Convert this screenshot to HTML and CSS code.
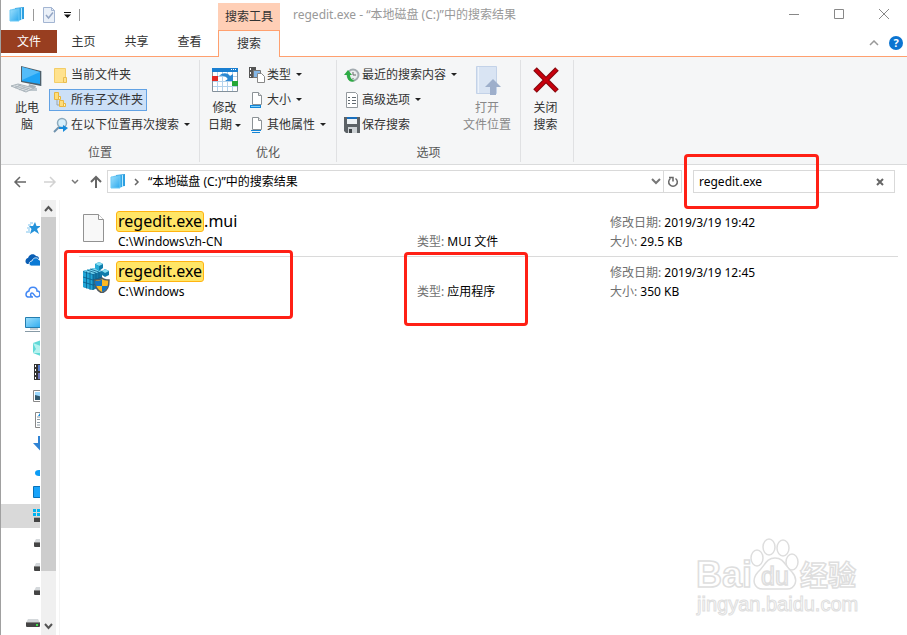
FILE: index.html
```html
<!DOCTYPE html>
<html lang="zh-CN">
<head>
<meta charset="utf-8">
<title>regedit.exe - “本地磁盘 (C:)”中的搜索结果</title>
<link rel="stylesheet" href="styles.css">
</head>
<body>
<svg class="defs" aria-hidden="true">
  <defs>
    <linearGradient id="sky" x1="0" y1="0" x2="1" y2="1"><stop offset="0" stop-color="#9fe0fc"/><stop offset="1" stop-color="#2ba9ee"/></linearGradient>
    <symbol id="library" viewBox="0 0 16 16">
      <path d="M6 1l9-1v12l-9 1z" fill="#2d9fe0"/><path d="M4 2l9-1v12l-9 1z" fill="#b5e9ff"/><path d="M3.500 2l8.500-1v12l-8.500 1z" fill="#35a9e8"/><path d="M1 3l9-1v12l-9 0z" fill="url(#sky)" stroke="#6cc9f5"/>
    </symbol>
    <symbol id="drive" viewBox="0 0 16 16"><path d="M3 5h10l2 4H1z" fill="#d4d8db"/><rect x="1" y="8" width="14" height="5" rx="1" fill="#454545"/><rect x="1" y="8" width="14" height="1" fill="#858585"/><rect x="11" y="10" width="2" height="2" fill="#41e04d"/></symbol>
    <symbol id="paper" viewBox="0 0 12 14"><path d="M1.500.5h6l3 3v9h-9z" fill="#fff" stroke="#8c9296"/><path d="M7.500.5v3h3" fill="#e8e8e8" stroke="#8c9296"/></symbol>
  </defs>
</svg>
<div class="window">
  <header class="top">
    <div class="titlebar">
      <div class="quick">
        <svg width="16" height="16"><use href="#library"/></svg>
        <span class="bar"></span>
        <button class="plain" aria-label="属性"><svg width="14" height="16" viewBox="0 0 14 16"><path d="M1.500.5h8l3 3v12h-11z" fill="#eaf0f8" stroke="#a3b5d2"/><path d="M9.500.5v3h3" fill="none" stroke="#a3b5d2"/><path d="M4 8l2.500 3L11 5.500" fill="none" stroke="#93a5c4" stroke-width="1.500"/></svg></button>
        <button class="plain" aria-label="自定义快速访问工具栏"><svg width="7" height="6" viewBox="0 0 7 6"><path d="M0 0h7v1H0zM0 2.500h7L3.500 6z" fill="#111"/></svg></button>
        <span class="bar"></span>
      </div>
      <div class="context">搜索工具</div>
      <h1>regedit.exe - “本地磁盘 (C:)”中的搜索结果</h1>
      <div class="controls">
        <button class="plain" aria-label="最小化"><svg width="12" height="12"><path d="M1 6.500h10" stroke="#888"/></svg></button>
        <button class="plain" aria-label="最大化"><svg width="12" height="12"><path d="M1.500 1.500h9v9h-9z" fill="none" stroke="#888"/></svg></button>
        <button class="plain" aria-label="关闭"><svg width="12" height="12"><path d="M1 1l10 10M11 1L1 11" stroke="#888"/></svg></button>
      </div>
    </div>
    <nav class="tabs">
      <button class="file">文件</button>
      <button>主页</button>
      <button>共享</button>
      <button>查看</button>
      <button class="active">搜索</button>
      <div class="help">
        <button class="plain" aria-label="最小化功能区"><svg width="10" height="6"><path d="M1 5l4-4 4 4" fill="none" stroke="#999" stroke-width="1.500"/></svg></button>
        <button class="round" aria-label="帮助">?</button>
      </div>
    </nav>
  </header>

  <div class="ribbon">
    <section class="group location">
      <div class="tools">
        <button class="big"><svg width="32" height="32" viewBox="0 0 32 32"><path d="M10 2l20 5v15l-20-4z" fill="#4e5e69"/><path d="M11 3l18 5v12l-18-3z" fill="#1fa4f5"/><path d="M11 3l18 5-18 8z" fill="#54bcf8"/><path d="M30 7l1 0v15l-1 0z" fill="#bbc7ce"/><path d="M18 20l-1 4 7 1 1-3z" fill="#a7b1b8"/><path d="M14 23l12 1v3l-9 0z" fill="#bec7cd"/><path d="M0 22l7-2 16 4-8 4z" fill="#d9dfe3" stroke="#a9b3ba"/><path d="M4 22l13 4M7 21l12 4M4 24l6-3m-2 5l6-3m-2 4l6-3" stroke="#a3adb4" stroke-width=".7"/></svg><span>此电<br>脑</span></button>
        <div class="stack">
          <button><svg width="16" height="16"><path d="M1.500 1.500h11v14h-11z" fill="#ffe28d" stroke="#f3cd67"/><path d="M10.500 10.500h3v5h-3z" fill="#ffe28d" stroke="#e9bd50"/></svg>当前文件夹</button>
          <button class="selected"><svg width="16" height="16"><path d="M4 8v5h3" fill="none" stroke="#9da5a9"/><path d="M1.500.5h4v7h-4zM6.500 8.500h4v6h-4z" fill="#ffdd7a" stroke="#e8b63f"/><path d="M5.500 4.500h2v3h-2zM10.500 11.500h2v3h-2z" fill="#fff0ba" stroke="#e8b63f"/></svg>所有子文件夹</button>
          <button><svg width="16" height="16"><path d="M1 15l5-5" stroke="#6f92ad" stroke-width="2"/><circle cx="9" cy="6" r="4.500" fill="#d6effb" stroke="#8caabd" stroke-width="1.500"/><path d="M6 10h4V8l5 3-5 4v-3H6z" fill="#168bdb"/></svg>在以下位置再次搜索<i class="caret"></i></button>
        </div>
      </div>
      <h2>位置</h2>
    </section>
    <section class="group refine">
      <div class="tools">
        <button class="big"><svg width="28" height="32" viewBox="0 0 28 32"><path d="M1.500 4.500h25v23h-25z" fill="#fff" stroke="#83909a"/><path d="M1 4h26v4H1z" fill="#1a7fd1"/><path d="M20 5h1v1h-1zm2 0h1v1h-1zm2 0h1v1h-1z" fill="#fff"/><path d="M6.500 8v19m5-19v19m5-19v19m5-19v19M2 12.500h24M2 17.500h24M2 22.500h24" stroke="#b3d2ec"/><path d="M8 12c4-4 9-3 11 0l3-2v7h-8l3-2c-2-3-5-4-9-3z" fill="#2c88d2"/><path d="M1 12h6v5H1z" fill="#e22923"/><path d="M21 17h6v5h-6z" fill="#24a637"/></svg><span>修改<br>日期<i class="caret"></i></span></button>
        <div class="stack">
          <button><svg width="16" height="16"><path d="M0 0h7v11H0z" fill="#555"/><path d="M1 1h1v2H1zm0 4h1v2H1zm0 4h1v1H1z" fill="#fff"/><path d="M4.500 3.500h7v7h-7z" fill="#85b8e8" stroke="#777"/><path d="M8.500 6.500h4l3 3v6h-7z" fill="#fff" stroke="#888"/></svg>类型<i class="caret"></i></button>
          <button><svg width="16" height="16"><use href="#paper" x="2" width="12" height="14"/><path d="M1 13h11v3H1z" fill="#1485d6"/><path d="M2 14h9v1H2z" fill="#7bd2ff"/></svg>大小<i class="caret"></i></button>
          <button><svg width="16" height="16"><use href="#paper" x="2" width="12" height="14"/><path d="M2 13h10v1H2zm1 2h8v1H3z" fill="#1485d6"/></svg>其他属性<i class="caret"></i></button>
        </div>
      </div>
      <h2>优化</h2>
    </section>
    <section class="group options">
      <div class="tools">
        <div class="stack">
          <button><svg width="16" height="16"><circle cx="9" cy="8" r="5.500" fill="#e9ecee" stroke="#a3abb0" stroke-width="2"/><path d="M9 5v3h3M9 11v1" fill="none" stroke="#666"/><path d="M0 8l4-5 4 5H6c0 3 2 5 5 6-5 2-8-1-8-6z" fill="#2eab45"/></svg>最近的搜索内容<i class="caret"></i></button>
          <button><svg width="16" height="16"><path d="M2.500.5h9l2 2v13h-11z" fill="#fff" stroke="#93999d"/><path d="M4 5h2v1H4zm0 3h2v1H4zm0 3h2v1H4zm4-6h4v1H8zm0 3h4v1H8zm0 3h4v1H8z" fill="#616a70"/></svg>高级选项<i class="caret"></i></button>
          <button><svg width="16" height="16"><path d="M0 0h16v16H2l-2-2z" fill="#5c6266"/><path d="M3 0h10v7H3z" fill="#eef2f4"/><path d="M3 0h10v2H3z" fill="#1a6fbd"/><path d="M4 10h9v6H4z" fill="#cdd2d5"/><path d="M5 12h3v4H5z" fill="#41464a"/></svg>保存搜索</button>
        </div>
        <button class="big wide" disabled><svg width="28" height="32" viewBox="0 0 28 32"><path d="M3.500 2.500h20v27h-20z" fill="#d9e4f3" stroke="#c3d2e8"/><path d="M5.500 3v26" stroke="#edf3fb"/><path d="M20 15l8 8h-5v8h-6v-8h-5z" fill="#9eafcb"/></svg><span>打开<br>文件位置</span></button>
      </div>
      <h2>选项</h2>
    </section>
    <section class="group closing">
      <div class="tools">
        <button class="big"><svg width="28" height="32" viewBox="0 0 28 32"><path d="M3 5l22 22M25 5L3 27" stroke="#81070c" stroke-width="5"/><path d="M3.500 5.500l21 21M24.500 5.500l-21 21" stroke="#c8000d" stroke-width="3"/></svg><span>关闭<br>搜索</span></button>
      </div>
    </section>
  </div>

  <div class="address">
    <div class="history">
      <button class="plain" aria-label="后退"><svg width="14" height="12"><path d="M13 6H2M7 1L2 6l5 5" fill="none" stroke="#666" stroke-width="1.500"/></svg></button>
      <button class="plain" aria-label="前进"><svg width="14" height="12"><path d="M1 6h11M7 1l5 5-5 5" fill="none" stroke="#d2d2d2" stroke-width="1.500"/></svg></button>
      <button class="plain" aria-label="最近浏览的位置"><svg width="8" height="6"><path d="M1 1l3 3 3-3" fill="none" stroke="#777" stroke-width="1.500"/></svg></button>
      <button class="plain" aria-label="向上"><svg width="12" height="14"><path d="M6 13V2M1 7l5-5 5 5" fill="none" stroke="#666" stroke-width="2"/></svg></button>
    </div>
    <div class="path">
      <svg width="16" height="16"><use href="#library"/></svg>
      <svg width="6" height="8"><path d="M1 1l3 3-3 3" fill="none" stroke="#666" stroke-width="1.500"/></svg>
      <span class="crumb">“本地磁盘 (C:)”中的搜索结果</span>
      <button class="plain" aria-label="以前的位置"><svg width="10" height="7"><path d="M1 1l4 4 4-4" fill="none" stroke="#777" stroke-width="2"/></svg></button>
      <button class="refresh" aria-label="刷新"><svg width="12" height="12"><path d="M8.500 2.500A4.300 4.300 0 1 1 3.500 2.500M2 1.500h4v4" fill="none" stroke="#666" stroke-width="1.500"/></svg></button>
    </div>
    <div class="search">
      <input type="text" value="regedit.exe" aria-label="搜索">
      <button class="plain" aria-label="清除"><svg width="8" height="8"><path d="M1 1l6 6M7 1L1 7" stroke="#666" stroke-width="2"/></svg></button>
      <span class="mark mark-search"></span>
    </div>
  </div>

  <div class="body">
    <nav class="tree">
      <a href="#" class="root" aria-label="快速访问"><svg width="16" height="16"><path d="M10 2l1.500 4H16l-4 3 2 5-4.500-3L5 14l1.500-5L4 6h4z" fill="#2492da"/><path d="M5 3h3M3 5h3M2 8h3M3 10h2M1 12h4" stroke="#7cc3ee"/></svg></a>
      <a href="#" class="root" aria-label="OneDrive"><svg width="16" height="16"><path d="M2 12C-1 10 1 6 3 6c1-4 6-5 8-2 2 0 3 1 3 3L7 12z" fill="#0a5eb4"/><path d="M6 14c-3-1-2-5 1-5 1-4 6-4 7-1 3 0 4 6 1 6z" fill="#0b7ad5" stroke="#fff" stroke-width=".8"/></svg></a>
      <a href="#" class="root" aria-label="网盘"><svg width="16" height="16"><path d="M4 13c-4 0-4-5 0-6 0-5 8-5 8 0 4 0 4 6 0 6-3 0-3-4-5-4S5 13 8 13z" fill="none" stroke="#4489f5" stroke-width="1.500"/></svg></a>
      <a href="#" class="root" aria-label="此电脑"><svg width="16" height="16"><path d="M.5 1.500h16v10H.500z" fill="url(#sky)" stroke="#247daf"/><path d="M5 13h8M0 15.500h16" stroke="#879aa6"/></svg></a>
      <a href="#" aria-label="3D 对象"><svg width="16" height="16"><path d="M0 3l8-3v16l-8-3z" fill="#62d9d7"/><path d="M0 3l8 3v7l-8 0 3-4z" fill="#b5f2ef"/></svg></a>
      <a href="#" aria-label="视频"><svg width="16" height="16"><path d="M1 0h15v16H1z" fill="#333"/><path d="M2 1h1v2H2zm0 4h1v2H2zm0 4h1v2H2zm0 4h1v2H2z" fill="#fff"/><path d="M5 1h6v6H5z" fill="#5278c9"/><path d="M5 9h6v6H5z" fill="#6d76ba"/></svg></a>
      <a href="#" aria-label="图片"><svg width="16" height="16"><path d="M.5 2.500h15v11H.500z" fill="#fff" stroke="#888"/><path d="M2 4h12v4H2z" fill="#9edaff"/><path d="M2 7l4 1 8 1v3H2z" fill="#315970"/></svg></a>
      <a href="#" aria-label="文档"><svg width="16" height="16"><path d="M2.500.5h11v15h-11z" fill="#fff" stroke="#888"/><path d="M4 5h6M4 7.500h6M4 10.500h6M4 13h6" stroke="#8b9ba6"/><path d="M5 4l2-3v3z" fill="#148edf"/></svg></a>
      <a href="#" aria-label="下载"><svg width="16" height="16"><path d="M5 0h5v7h5l-7.500 8L0 7h5z" fill="#3083d4"/></svg></a>
      <a href="#" aria-label="音乐"><svg width="16" height="16"><ellipse cx="6" cy="13" rx="4" ry="3" fill="#0c9cf5"/><path d="M9 0v12" stroke="#0c9cf5" stroke-width="2"/></svg></a>
      <a href="#" aria-label="桌面"><svg width="16" height="16"><path d="M.5 2.500h15v11H.500z" fill="#18a4fb" stroke="#0871b8"/></svg></a>
      <a href="#" class="current" aria-label="本地磁盘 (C:)"><svg width="16" height="16"><path d="M0 1h3v3H0zm4 0h3v3H4zM0 5h3v3H0zm4 0h3v3H4z" fill="#00b4f1"/><rect x="1" y="9" width="15" height="5" fill="#454545"/><path d="M1 9h15v1H1z" fill="#aaa"/></svg></a>
      <a href="#" aria-label="本地磁盘 (D:)"><svg width="16" height="16" viewBox="0 -2 16 16"><use href="#drive" width="16" height="16"/></svg></a>
      <a href="#" aria-label="本地磁盘 (E:)"><svg width="16" height="16" viewBox="0 -2 16 16"><use href="#drive" width="16" height="16"/></svg></a>
      <a href="#" aria-label="本地磁盘 (F:)"><svg width="16" height="16" viewBox="0 -2 16 16"><use href="#drive" width="16" height="16"/></svg></a>
      <a href="#" class="root last" aria-label="可移动磁盘"><svg width="16" height="16" viewBox="0 -2 16 16"><use href="#drive" width="16" height="16"/></svg></a>
    </nav>
    <div class="scrollbar">
      <button class="plain" aria-label="向上滚动"><svg width="9" height="7"><path d="M1 6l3.500-4L8 6" fill="none" stroke="#555" stroke-width="2"/></svg></button>
      <div class="track"><div class="thumb"></div></div>
      <button class="plain" aria-label="向下滚动"><svg width="9" height="7"><path d="M1 1l3.500 4L8 1" fill="none" stroke="#555" stroke-width="2"/></svg></button>
    </div>
    <main class="results">
      <article class="row">
        <svg class="fileicon" width="28" height="32" viewBox="0 0 28 32"><path d="M.5 3.500h15l5 5v22H.500z" fill="#f8f8f8" stroke="#929292"/><path d="M15.500 3.500v5h5" fill="#fff" stroke="#929292"/></svg>
        <div class="name"><h3><mark>regedit.exe</mark>.mui</h3><p>C:\Windows\zh-CN</p></div>
        <p class="type"><span>类型:</span> MUI 文件</p>
        <div class="meta"><p><span>修改日期:</span> 2019/3/19 19:42</p><p><span>大小:</span> 29.5 KB</p></div>
      </article>
      <article class="row">
        <svg class="fileicon" width="28" height="32" viewBox="0 -1 28 32">
          <path d="M0 9l11-3 8 3v15l-9 4-10-3z" fill="#1378a8"/>
          <path d="M0 9l11-3 8 3-9 3z" fill="#7bd9f4"/>
          <path d="M0 10l10 3v15L0 25z" fill="#21a4d5"/>
          <path d="M3.500 9.500v17M7 10v18M0 15l10 3 9-3M0 20l10 3 9-3M10 12v16m3-17v15m3-16v15M4 8l9 3m-6-4l9 3" fill="none" stroke="#0b5c88" stroke-width=".8"/>
          <path d="M16 0l4 2v4l-4 3-4-3V2z" fill="#107cab"/><path d="M16 0l4 2-4 2-4-2z" fill="#87dff4"/><path d="M12 2l4 2v5l-4-3z" fill="#27acd9"/>
          <path d="M22 7l4 2v4l-4 2-3-2V9z" fill="#107cab"/><path d="M22 7l4 2-4 2-3-2z" fill="#87dff4"/>
          <path d="M19 16c2 2 5 2 7 2 0 6-1 10-7 13-6-3-7-7-7-13 2 0 5 0 7-2z" fill="#fcb823" stroke="#555b60" stroke-width="1.500"/><path d="M19 17v7h-6c-1-2-1-4-1-5 3 0 5 0 7-2zM19 24h6c-1 3-3 5-6 6z" fill="#1476c4"/>
        </svg>
        <div class="name"><h3><mark>regedit.exe</mark></h3><p>C:\Windows</p><span class="mark mark-name"></span></div>
        <div class="type"><span>类型:</span> 应用程序<span class="mark mark-type"></span></div>
        <div class="meta"><p><span>修改日期:</span> 2019/3/19 12:45</p><p><span>大小:</span> 350 KB</p></div>
      </article>
    </main>
  </div>
  <svg class="watermark" width="170" height="84" viewBox="0 0 170 84">
    <g fill="#fff" stroke="#dedede" stroke-width="1.500">
      <ellipse cx="64" cy="22" rx="6" ry="8"/><ellipse cx="76" cy="11" rx="6" ry="8"/><ellipse cx="90" cy="12" rx="6" ry="8"/><ellipse cx="99" cy="26" rx="6" ry="8"/>
      <path d="M82 22c9 0 10 8 17 14 7 8 3 17-5 17H70c-9 0-12-9-5-17 7-6 8-14 17-14z"/>
      <text x="3" y="51" class="brand">Bai</text><text x="68" y="49" class="du">du</text><text x="107" y="50" class="cn">经验</text>
      <text x="4" y="75" class="site">jingyan.baidu.com</text>
    </g>
  </svg>
</div>
</body>
</html>
```
FILE: styles.css
```css
* { box-sizing: border-box; }
body {
  margin: 0;
  background: #fff;
  color: #000;
  font: 12px/18px "Noto Sans", "Noto Sans CJK SC", sans-serif;
}
h1, h2, h3, p { margin: 0; font-weight: 400; }
button { font: inherit; color: inherit; border: 0; background: none; padding: 0; }
svg { display: block; flex: none; }
.defs { position: absolute; width: 0; height: 0; }
.window {
  position: relative;
  display: flex;
  flex-direction: column;
  min-height: 100vh;
  border-left: 1px solid #a0a0a0;
}
.plain { display: flex; align-items: center; justify-content: center; }

.titlebar { display: flex; height: 30px; }
.quick { display: flex; align-items: center; gap: 8px; width: 217px; padding-left: 8px; }
.bar { width: 1px; height: 12px; background: #999; }
.context { width: 62px; margin-top: 3px; padding-top: 5px; background: #ffcfb6; text-align: center; color: #333; }
.titlebar h1 { flex: 1; padding-left: 13px; font-size: 12px; line-height: 30px; color: #999; }
.controls { display: flex; padding-right: 1px; }
.controls button { width: 45px; height: 28px; }

.tabs { display: flex; height: 27px; border-bottom: 1px solid #ffa06f; }
.tabs > button { width: 53px; height: 24px; color: #333; }
.tabs > .file { width: 56px; height: 23px; background: #983e20; color: #fff; }
.tabs > .active { width: 62px; height: 27px; margin-left: 2px; border: 1px solid #ffa06f; border-bottom: 0; background: #f5f6f7; }
.help { display: flex; align-items: center; gap: 10px; margin-left: auto; padding-right: 4px; }
.round { width: 14px; height: 14px; border-radius: 50%; background: #0b74d1; color: #fff; font-size: 11px; font-weight: 700; line-height: 14px; }

.ribbon { display: flex; height: 108px; background: #f5f6f7; border-bottom: 1px solid #dadbdc; color: #333; }
.group { display: flex; flex-direction: column; justify-content: space-between; margin: 3px 0 2px; padding-top: 2px; border-right: 1px solid #e0e1e3; }
.group h2 { font-size: 12px; line-height: 18px; text-align: center; color: #555; }
.tools { display: flex; }
.location { width: 199px; }
.refine { width: 137px; }
.options { width: 184px; }
.closing { width: 53px; }
.stack { display: flex; flex-direction: column; gap: 3px; align-items: flex-start; padding-top: 2px; }
.stack button { display: flex; align-items: center; gap: 2px; height: 22px; padding: 0 3px; border: 1px solid transparent; white-space: nowrap; }
.stack .selected { background: #cce0f7; border-color: #62a2e4; }
.big { display: flex; flex-direction: column; align-items: center; width: 48px; padding: 2px 0 0; line-height: 17px; }
.big svg { margin-bottom: 3px; }
.location .big { padding-left: 4px; }
.refine .big { width: 45px; padding-left: 4px; }
.options .stack { width: 123px; padding-left: 3px; }
.closing .big { width: 49px; }
.wide { width: 54px; }
.wide:disabled { color: #888; }
.caret { display: inline-block; margin: 0 0 2px 3px; border: 3px solid transparent; border-top-color: #222; border-bottom: 0; }

.address { display: flex; align-items: center; height: 33px; padding-right: 12px; }
.history { display: flex; align-items: center; gap: 14px; width: 106px; padding-left: 12px; }
.history button:nth-child(1) { margin-right: 2px; }
.history button:nth-child(4) { margin-left: -3px; }
.path { display: flex; align-items: center; flex: 1; height: 23px; border: 1px solid #d9d9d9; padding-left: 2px; gap: 8px; }
.crumb { flex: 1; }
.refresh { display: flex; align-items: center; justify-content: center; align-self: stretch; width: 18px; margin-left: -6px; border-left: 1px solid #d9d9d9; }
.search { position: relative; display: flex; align-items: center; width: 202px; height: 23px; margin-left: 11px; border: 1px solid #d9d9d9; }
.search input { flex: 1; min-width: 0; padding: 0 5px; border: 0; outline: 0; background: none; font: inherit; color: #000; }
.search button { width: 28px; }

.body { display: flex; flex: 1; padding-top: 2px; }
.tree { width: 39px; overflow: hidden; padding-top: 16px; }
.tree a { display: flex; align-items: center; height: 24px; padding-left: 32px; }
.tree .root { padding-left: 24px; margin-bottom: 8px; }
.tree .root:nth-child(4) { margin-bottom: 0; }
.tree .last { margin: 8px 0 0; }
.tree .current { background: #d9d9d9; }
.scrollbar { display: flex; flex-direction: column; width: 15px; margin-left: 1px; background: #f0f0f0; }
.scrollbar button { height: 17px; }
.track { flex: 1; }
.thumb { height: 354px; background: #cdcdcd; }
.results { flex: 1; margin-left: 3px; padding: 7px 9px 0 19px; border-left: 1px solid #f4f4f4; }
.row { display: grid; grid-template-columns: 33px 1fr 193px 288px; height: 50px; padding-top: 4px; border-bottom: 1px solid #dadada; }
.row:last-child { border-bottom-color: transparent; }
.fileicon { margin-left: 4px; }
.name { position: relative; line-height: 20px; }
.name h3 { padding-left: 4px; font-size: 16px; line-height: 20px; }
.name p { padding-left: 6px; }
mark { display: inline-block; height: 21px; padding: 0 1px; border: 1px solid #ffb411; border-radius: 3px; background: #ffe566; color: #000; line-height: 19px; }
.type { position: relative; padding-top: 21px; line-height: 20px; }
.meta { padding-top: 2px; line-height: 19px; }
.type span, .meta span { color: #707070; }

.mark { position: absolute; border: 3px solid #ff2015; border-radius: 4px; pointer-events: none; }
.mark-search { left: -10px; top: -17px; width: 135px; height: 55px; }
.mark-name { left: -48px; top: -11px; width: 229px; height: 69px; }
.mark-type { left: -13px; top: -9px; width: 124px; height: 74px; }

.watermark { position: absolute; right: 44px; bottom: 15px; }
.watermark text { font-family: "Liberation Sans", "Noto Sans CJK SC", sans-serif; }
.watermark .brand { font-size: 36px; font-weight: 700; }
.watermark .du { font-size: 25px; }
.watermark .cn { font-size: 28px; font-weight: 700; }
.watermark .site { font-size: 20px; stroke-width: 1px; }
```
